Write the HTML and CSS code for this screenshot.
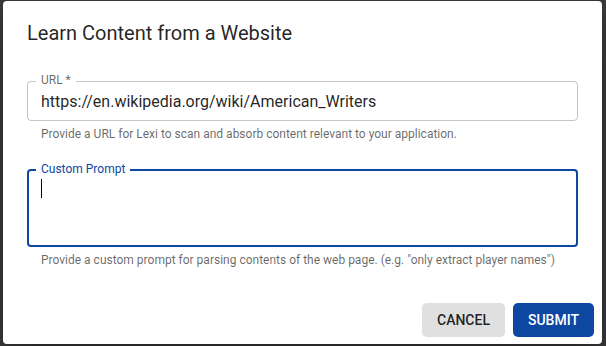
FILE: index.html
```html
<!DOCTYPE html>
<html lang="en">
<head>
<meta charset="utf-8">
<title>Learn Content from a Website</title>
<link rel="stylesheet" href="styles.css">
</head>
<body>
<div class="dialog" role="dialog" aria-labelledby="dlg-title">
  <h2 class="title" id="dlg-title">Learn Content from a Website</h2>
  <div class="content">
    <div class="field field-url">
      <div class="box">
        <div class="outline"></div>
        <label class="label" for="url">URL *</label>
        <input class="input" id="url" type="text" value="https://en.wikipedia.org/wiki/American_Writers">
      </div>
      <p class="helper">Provide a URL for Lexi to scan and absorb content relevant to your application.</p>
    </div>
    <div class="field field-prompt">
      <div class="box focused">
        <div class="outline"></div>
        <span class="label">Custom Prompt</span>
        <div class="textarea" role="textbox" aria-multiline="true"><span class="caret"></span></div>
      </div>
      <p class="helper">Provide a custom prompt for parsing contents of the web page. (e.g. "only extract player names")</p>
    </div>
  </div>
  <div class="actions">
    <button class="btn btn-cancel" type="button">Cancel</button>
    <button class="btn btn-submit" type="button">Submit</button>
  </div>
</div>
</body>
</html>
```
FILE: styles.css
```css
* { box-sizing: border-box; }
html, body { margin: 0; height: 100%; }
body {
  background: #3c3c3c;
  font-family: Roboto, "Noto Sans", "Liberation Sans", sans-serif;
  color: rgba(0, 0, 0, 0.87);
  overflow: hidden;
}
.dialog {
  width: 599px;
  height: 343px;
  margin: 1px 0 0 3px;
  background: #fff;
  border-radius: 4px;
  display: flex;
  flex-direction: column;
  box-shadow: 0 11px 15px -7px rgba(0,0,0,0.2), 0 24px 38px 3px rgba(0,0,0,0.14), 0 9px 46px 8px rgba(0,0,0,0.12);
}
.title {
  margin: 0;
  padding: 16px 24px;
  font-size: 20px;
  font-weight: 400;
  line-height: 32px;
  letter-spacing: 0;
}
.content {
  padding: 16px 24px 0;
  display: flex;
  flex-direction: column;
  gap: 25px;
}
.field { display: flex; flex-direction: column; }
.box { position: relative; }
.outline {
  position: absolute;
  inset: 0;
  border: 1px solid rgba(0, 0, 0, 0.23);
  border-radius: 4px;
  pointer-events: none;
}
.focused .outline { border: 2px solid #0d47a1; }
.label {
  position: absolute;
  left: 9px;
  top: -8px;
  padding: 0 5px;
  background: #fff;
  font-size: 12px;
  line-height: 14px;
  color: rgba(0, 0, 0, 0.6);
}
.focused .label { color: #0d47a1; top: -7px; }
.input {
  display: block;
  width: 100%;
  height: 40px;
  border: 0;
  outline: 0;
  background: transparent;
  padding: 8.5px 14px;
  font: inherit;
  font-size: 16px;
  line-height: 23px;
  color: rgba(0, 0, 0, 0.87);
}
.textarea {
  height: 78px;
  padding: 10px 14px;
  font-size: 16px;
  line-height: 19px;
}
.caret {
  display: inline-block;
  width: 1px;
  height: 19px;
  background: #000;
  vertical-align: top;
}
.helper {
  margin: 3px 14px 0;
  font-size: 12px;
  line-height: 20px;
  color: rgba(0, 0, 0, 0.6);
}
.actions {
  display: flex;
  justify-content: flex-end;
  gap: 8px;
  padding: 8px 8px 7px;
  margin-top: auto;
}
.btn {
  height: 34px;
  padding: 0 15px;
  border: 0;
  border-radius: 5px;
  font-family: inherit;
  font-size: 14px;
  font-weight: 500;
  text-transform: uppercase;
  letter-spacing: 0;
  line-height: 34px;
}
.btn-cancel { background: #e0e0e0; color: rgba(0, 0, 0, 0.87); }
.btn-submit { background: #0d47a1; color: #fff; }
```
